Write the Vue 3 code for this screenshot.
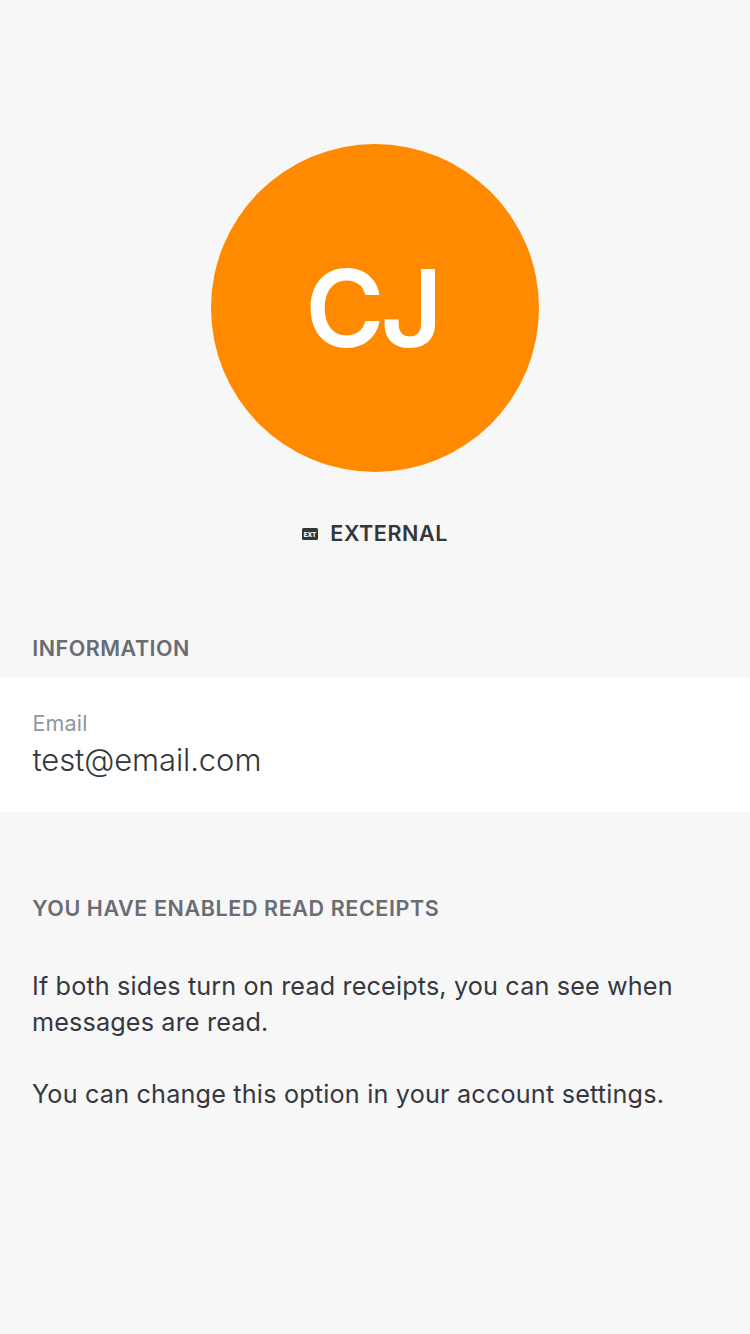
<script setup>
const initials = 'CJ'
const email = 'test@email.com'
</script>

<template>
  <main class="profile">
    <div class="avatar"><span class="initials">{{ initials }}</span></div>
    <div class="badge">
      <svg class="ext" width="16" height="12" viewBox="0 0 16 12">
        <rect width="16" height="12" rx="1.6" fill="#33373a" />
        <text x="8" y="8.6" text-anchor="middle" textLength="12.4" lengthAdjust="spacingAndGlyphs">EXT</text>
      </svg>
      <span class="external">EXTERNAL</span>
    </div>
    <h2 class="heading info">INFORMATION</h2>
    <section class="card">
      <div class="label">Email</div>
      <div class="value">{{ email }}</div>
    </section>
    <h2 class="heading receipts">YOU HAVE ENABLED READ RECEIPTS</h2>
    <p class="text">If both sides turn on read receipts, you can see when<br />messages are read.</p>
    <p class="text second">You can change this option in your account settings.</p>
  </main>
</template>

<style>
html,
body {
  background: #f7f7f7;
}
</style>

<style scoped>
.profile {
  box-sizing: border-box;
  width: 750px;
  height: 1334px;
  padding-top: 144px;
  overflow: hidden;
  background: #f7f7f7;
  color: #33373a;
  font-family: Inter, "Liberation Sans", sans-serif;
}
.avatar {
  display: flex;
  align-items: center;
  justify-content: center;
  width: 328px;
  height: 328px;
  margin: 0 auto;
  border-radius: 50%;
  background: #ff8a00;
  color: #fff;
  font-size: 107.5px;
  font-weight: 600;
}
.initials {
  margin-left: -6px;
  letter-spacing: -4px;
}
.badge {
  display: flex;
  align-items: center;
  height: 28px;
  margin: 48px 0 0 302px;
}
.ext text {
  fill: #fff;
  font-size: 6.8px;
  font-weight: 800;
}
.external {
  margin: -2px 0 0 12.3px;
  font-size: 21.5px;
  font-weight: 600;
  letter-spacing: 0.58px;
}
.heading {
  height: 28px;
  margin: 86px 0 0 32.2px;
  color: #696c72;
  font-size: 21.5px;
  font-weight: 600;
  line-height: 28px;
  letter-spacing: 0.6px;
}
.info {
  letter-spacing: 0.52px;
}
.card {
  box-sizing: border-box;
  height: 134px;
  margin-top: 16px;
  padding: 31px 32.4px 0;
  background: #fff;
}
.label {
  color: #8d989f;
  font-size: 21.5px;
  line-height: 28px;
  letter-spacing: 0.2px;
}
.value {
  margin-top: 1px;
  font-size: 31px;
  font-weight: 300;
  line-height: 44px;
  letter-spacing: -0.1px;
}
.receipts {
  margin-top: 82px;
}
.text {
  margin: 46px 0 0 32px;
  color: #36383f;
  font-size: 25.2px;
  line-height: 36px;
  letter-spacing: 0.15px;
  white-space: nowrap;
}
.second {
  margin-top: 36px;
  letter-spacing: 0.19px;
}
</style>
